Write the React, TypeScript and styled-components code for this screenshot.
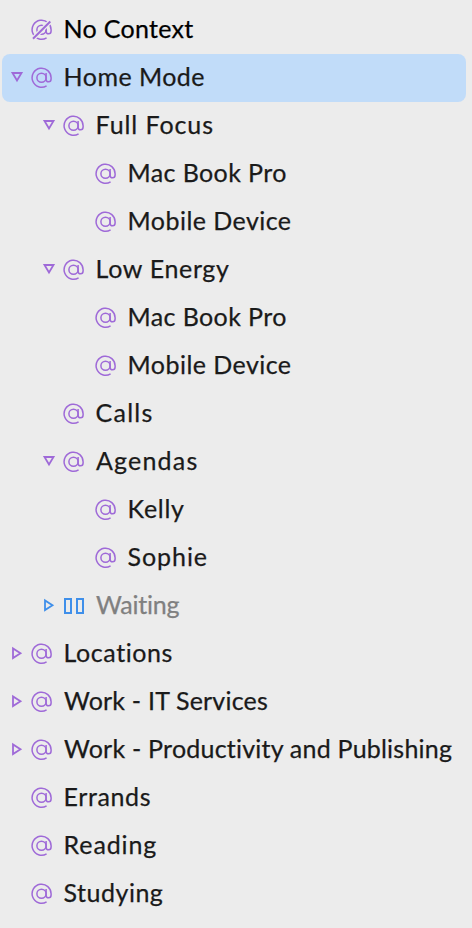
import React from "react";
import styled, { createGlobalStyle } from "styled-components";

const PURPLE = "#9f6ad8";
const BLUE = "#3f8fea";

const GlobalStyle = createGlobalStyle`
  body {
    margin: 0;
    background: #ececec;
  }
`;

const Sidebar = styled.nav`
  box-sizing: border-box;
  width: 472px;
  height: 928px;
  padding: 6px 6px 0 2px;
  overflow: hidden;
  background: #ececec;
  font-family: Lato, "Open Sans", sans-serif;
`;

const Row = styled.div<{ $depth: number; $selected?: boolean }>`
  box-sizing: border-box;
  display: flex;
  align-items: center;
  height: 48px;
  padding-left: ${(p) => 8 + p.$depth * 32}px;
  border-radius: 8px;
  background: ${(p) => (p.$selected ? "#c1dcf9" : "transparent")};
`;

const Disclosure = styled.span`
  display: flex;
  flex: none;
  width: 21px;
  height: 22px;
`;

const IconSlot = styled.span`
  display: flex;
  flex: none;
  width: 22px;
  height: 22px;
`;

const Label = styled.span<{ $tone?: string; $tracking: number; $gap: number }>`
  margin-left: ${(p) => p.$gap}px;
  padding-bottom: 4px;
  color: ${(p) => p.$tone ?? "#1a1a1a"};
  font-size: 25px;
  line-height: 44px;
  height: 44px;
  letter-spacing: ${(p) => p.$tracking}px;
  font-variant-ligatures: none;
  white-space: nowrap;
  -webkit-text-stroke: 0.25px currentColor;
`;

function Triangle({ open, color }: { open: boolean; color: string }) {
  return (
    <svg width="21" height="22" fill="none" stroke={color} strokeWidth="1.8">
      <path d={open ? "M2.5 6H11.5L7 13.4Z" : "M3 5.5V15.1L10.5 10.3Z"} />
    </svg>
  );
}

function AtPath() {
  return (
    <>
      <ellipse cx="10.5" cy="10.7" rx="4.6" ry="4.5" />
      <path d="M15.6 18.8A9.5 9.5 0 1 1 20.1 11V12C20.1 13.8 19.2 14.8 17.6 14.8S15.1 13.8 15.1 12.2V6.1" />
    </>
  );
}

function AtIcon() {
  return (
    <svg width="22" height="22" fill="none" stroke={PURPLE} strokeWidth="1.5">
      <AtPath />
    </svg>
  );
}

function NoContextIcon() {
  return (
    <svg width="22" height="22" fill="none" stroke={PURPLE} strokeWidth="1.5">
      <mask id="slash-gap" maskUnits="userSpaceOnUse" x="0" y="0" width="22" height="22">
        <rect width="22" height="22" fill="#fff" stroke="none" />
        <path d="M0 21.7L22 -0.3" stroke="#000" strokeWidth="4.6" />
      </mask>
      <g mask="url(#slash-gap)">
        <AtPath />
      </g>
      <path d="M2 19.8L19.3 2.5" strokeWidth="2" />
    </svg>
  );
}

function PauseIcon() {
  return (
    <svg width="22" height="22" fill="none" stroke={BLUE} strokeWidth="2">
      <rect x="2" y="4" width="6" height="14" />
      <rect x="14" y="4" width="6" height="14" />
    </svg>
  );
}

type Item = {
  label: string;
  depth: number;
  tracking: number;
  gap?: number;
  state?: "open" | "closed";
  kind?: "none" | "waiting";
  selected?: boolean;
};

const items: Item[] = [
  { label: "No Context", depth: 0, tracking: 0.28, kind: "none" },
  { label: "Home Mode", depth: 0, tracking: 0.46, state: "open", selected: true },
  { label: "Full Focus", depth: 1, tracking: 0.9, state: "open" },
  { label: "Mac Book Pro", depth: 2, tracking: 0.38 },
  { label: "Mobile Device", depth: 2, tracking: 0.45 },
  { label: "Low Energy", depth: 1, tracking: 0.66, state: "open" },
  { label: "Mac Book Pro", depth: 2, tracking: 0.38 },
  { label: "Mobile Device", depth: 2, tracking: 0.45 },
  { label: "Calls", depth: 1, tracking: 1.25 },
  { label: "Agendas", depth: 1, tracking: 1.18, gap: 11, state: "open" },
  { label: "Kelly", depth: 2, tracking: 0.7 },
  { label: "Sophie", depth: 2, tracking: 0.92 },
  { label: "Waiting", depth: 1, tracking: -0.2, gap: 11, state: "closed", kind: "waiting" },
  { label: "Locations", depth: 0, tracking: 0.56, state: "closed" },
  { label: "Work - IT Services", depth: 0, tracking: 0.2, gap: 11, state: "closed" },
  { label: "Work - Productivity and Publishing", depth: 0, tracking: 0.22, gap: 11, state: "closed" },
  { label: "Errands", depth: 0, tracking: 0.6 },
  { label: "Reading", depth: 0, tracking: 0.88 },
  { label: "Studying", depth: 0, tracking: 0.5 },
];

export default function App() {
  return (
    <>
      <GlobalStyle />
      <Sidebar>
        {items.map((item, i) => (
          <Row key={i} $depth={item.depth} $selected={item.selected}>
            <Disclosure>
              {item.state && (
                <Triangle open={item.state === "open"} color={item.kind === "waiting" ? BLUE : PURPLE} />
              )}
            </Disclosure>
            <IconSlot>
              {item.kind === "waiting" ? <PauseIcon /> : item.kind === "none" ? <NoContextIcon /> : <AtIcon />}
            </IconSlot>
            <Label
              $tracking={item.tracking}
              $gap={item.gap ?? 10.6}
              $tone={item.kind === "waiting" ? "#808080" : item.kind === "none" ? "#000" : undefined}
            >
              {item.label}
            </Label>
          </Row>
        ))}
      </Sidebar>
    </>
  );
}
